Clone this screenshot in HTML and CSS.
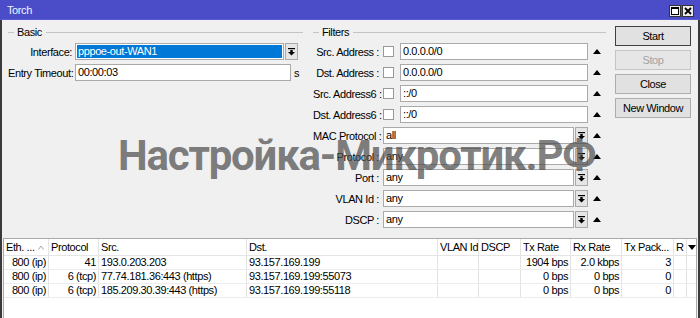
FILE: index.html
```html
<!DOCTYPE html>
<html>
<head>
<meta charset="utf-8">
<title>Torch</title>
<link rel="stylesheet" href="styles.css">
</head>
<body>
<div class="window">
  <div class="titlebar">
    <span class="title">Torch</span>
    <div class="tb-btns">
      <svg class="tb-btn" width="12" height="12" viewBox="0 0 12 12"><rect x="0.5" y="0.5" width="11" height="11" fill="#ececec" stroke="#333"/><rect x="2.5" y="2.5" width="7" height="7" fill="#fff" stroke="#000"/><rect x="2" y="2" width="8" height="2" fill="#000"/></svg>
      <svg class="tb-btn" width="12" height="12" viewBox="0 0 12 12"><rect x="0.5" y="0.5" width="11" height="11" fill="#ececec" stroke="#333"/><path d="M3 3L9 9M9 3L3 9" stroke="#000" stroke-width="1.8"/></svg>
    </div>
  </div>
  <div class="frame">
    <div class="main">
      <section class="group basic">
        <div class="legend"><span>Basic</span></div>
        <div class="rows">
          <div class="row">
            <label class="lbl">Interface:</label>
            <div class="combo selected">pppoe-out-WAN1</div>
            <span class="dd"><svg width="7" height="8" viewBox="0 0 7 8"><rect x="0" y="0" width="7" height="1.2"/><rect x="2.3" y="2" width="2.4" height="2.2"/><path d="M0 4h7L3.5 7.6z"/></svg></span>
          </div>
          <div class="row">
            <label class="lbl">Entry Timeout:</label>
            <div class="input timeout">00:00:03</div>
            <span class="unit">s</span>
          </div>
        </div>
      </section>

      <section class="group filters">
        <div class="legend"><span>Filters</span></div>
        <div class="rows">
          <div class="row">
            <label class="lbl">Src. Address :</label>
            <div class="field"><span class="cb"></span><div class="input">0.0.0.0/0</div></div>
            <svg class="up" width="8" height="5" viewBox="0 0 8 5"><path d="M0 5h8L4 0z"/></svg>
          </div>
          <div class="row">
            <label class="lbl">Dst. Address :</label>
            <div class="field"><span class="cb"></span><div class="input">0.0.0.0/0</div></div>
            <svg class="up" width="8" height="5" viewBox="0 0 8 5"><path d="M0 5h8L4 0z"/></svg>
          </div>
          <div class="row">
            <label class="lbl">Src. Address6 :</label>
            <div class="field"><span class="cb"></span><div class="input">::/0</div></div>
            <svg class="up" width="8" height="5" viewBox="0 0 8 5"><path d="M0 5h8L4 0z"/></svg>
          </div>
          <div class="row">
            <label class="lbl">Dst. Address6 :</label>
            <div class="field"><span class="cb"></span><div class="input">::/0</div></div>
            <svg class="up" width="8" height="5" viewBox="0 0 8 5"><path d="M0 5h8L4 0z"/></svg>
          </div>
          <div class="row">
            <label class="lbl">MAC Protocol :</label>
            <div class="field"><div class="combo">all</div><span class="dd"><svg width="7" height="8" viewBox="0 0 7 8"><rect x="0" y="0" width="7" height="1.2"/><rect x="2.3" y="2" width="2.4" height="2.2"/><path d="M0 4h7L3.5 7.6z"/></svg></span></div>
            <svg class="up" width="8" height="5" viewBox="0 0 8 5"><path d="M0 5h8L4 0z"/></svg>
          </div>
          <div class="row">
            <label class="lbl">Protocol :</label>
            <div class="field"><div class="combo">any</div><span class="dd"><svg width="7" height="8" viewBox="0 0 7 8"><rect x="0" y="0" width="7" height="1.2"/><rect x="2.3" y="2" width="2.4" height="2.2"/><path d="M0 4h7L3.5 7.6z"/></svg></span></div>
            <svg class="up" width="8" height="5" viewBox="0 0 8 5"><path d="M0 5h8L4 0z"/></svg>
          </div>
          <div class="row">
            <label class="lbl">Port :</label>
            <div class="field"><div class="combo">any</div><span class="dd"><svg width="7" height="8" viewBox="0 0 7 8"><rect x="0" y="0" width="7" height="1.2"/><rect x="2.3" y="2" width="2.4" height="2.2"/><path d="M0 4h7L3.5 7.6z"/></svg></span></div>
            <svg class="up" width="8" height="5" viewBox="0 0 8 5"><path d="M0 5h8L4 0z"/></svg>
          </div>
          <div class="row">
            <label class="lbl">VLAN Id :</label>
            <div class="field"><div class="combo">any</div><span class="dd"><svg width="7" height="8" viewBox="0 0 7 8"><rect x="0" y="0" width="7" height="1.2"/><rect x="2.3" y="2" width="2.4" height="2.2"/><path d="M0 4h7L3.5 7.6z"/></svg></span></div>
            <svg class="up" width="8" height="5" viewBox="0 0 8 5"><path d="M0 5h8L4 0z"/></svg>
          </div>
          <div class="row">
            <label class="lbl">DSCP :</label>
            <div class="field"><div class="combo">any</div><span class="dd"><svg width="7" height="8" viewBox="0 0 7 8"><rect x="0" y="0" width="7" height="1.2"/><rect x="2.3" y="2" width="2.4" height="2.2"/><path d="M0 4h7L3.5 7.6z"/></svg></span></div>
            <svg class="up" width="8" height="5" viewBox="0 0 8 5"><path d="M0 5h8L4 0z"/></svg>
          </div>
        </div>
      </section>

      <div class="buttons">
        <button class="btn default">Start</button>
        <button class="btn disabled">Stop</button>
        <button class="btn">Close</button>
        <button class="btn">New Window</button>
      </div>
    </div>

    <div class="table">
      <div class="tr head">
        <div class="th sort"><span>Eth. ...</span><svg width="6" height="5" viewBox="0 0 6 5"><path d="M0.5 4.5L3 1L5.5 4.5" fill="none" stroke="#a8a8a8"/></svg></div>
        <div class="th">Protocol</div>
        <div class="th">Src.</div>
        <div class="th">Dst.</div>
        <div class="th">VLAN Id</div>
        <div class="th">DSCP</div>
        <div class="th">Tx Rate</div>
        <div class="th">Rx Rate</div>
        <div class="th">Tx Pack...</div>
        <div class="th">R</div>
        <div class="th menu"><svg width="8" height="5" viewBox="0 0 8 5"><path d="M0 0h8L4 5z"/></svg></div>
      </div>
      <div class="tr">
        <div class="td r">800 (ip)</div>
        <div class="td r">41</div>
        <div class="td">193.0.203.203</div>
        <div class="td">93.157.169.199</div>
        <div class="td"></div>
        <div class="td"></div>
        <div class="td r">1904 bps</div>
        <div class="td r">2.0 kbps</div>
        <div class="td r">3</div>
        <div class="td"></div>
        <div class="td last"></div>
      </div>
      <div class="tr">
        <div class="td r">800 (ip)</div>
        <div class="td r">6 (tcp)</div>
        <div class="td">77.74.181.36:443 (https)</div>
        <div class="td">93.157.169.199:55073</div>
        <div class="td"></div>
        <div class="td"></div>
        <div class="td r">0 bps</div>
        <div class="td r">0 bps</div>
        <div class="td r">0</div>
        <div class="td"></div>
        <div class="td last"></div>
      </div>
      <div class="tr">
        <div class="td r">800 (ip)</div>
        <div class="td r">6 (tcp)</div>
        <div class="td">185.209.30.39:443 (https)</div>
        <div class="td">93.157.169.199:55118</div>
        <div class="td"></div>
        <div class="td"></div>
        <div class="td r">0 bps</div>
        <div class="td r">0 bps</div>
        <div class="td r">0</div>
        <div class="td"></div>
        <div class="td last"></div>
      </div>
    </div>

    <div class="watermark">Настройка-Микротик.РФ</div>
  </div>
</div>
</body>
</html>
```

FILE: styles.css
```css
* { box-sizing: border-box; }
html, body { margin: 0; padding: 0; }
body {
  width: 700px;
  height: 318px;
  overflow: hidden;
  background: #f0f0f0;
  font-family: "Liberation Sans", Arial, sans-serif;
  font-size: 11px;
  letter-spacing: -0.4px;
  color: #000;
}
.window {
  width: 700px;
  height: 318px;
  display: flex;
  flex-direction: column;
}
.titlebar {
  height: 20px;
  flex: none;
  background: #4a4cc8;
  display: flex;
  align-items: center;
  justify-content: space-between;
  padding: 0 6px 0 7px;
  border-bottom: 1px solid #5a5cd0;
}
.title { color: #f4f4ff; font-size: 11px; }
.tb-btns { display: flex; gap: 1px; margin-top: 2px; }
.tb-btn { display: block; }

.frame {
  position: relative;
  flex: 1;
  display: flex;
  flex-direction: column;
  border-left: 2px solid #3a3a3a;
  border-right: 2px solid #3a3a3a;
  background: #f0f0f0;
}
.main {
  display: flex;
  padding: 5px 0 10px 6px;
}
.group { display: flex; flex-direction: column; }
.basic { width: 295px; }
.filters { width: 293px; margin-left: 10px; }
.legend {
  display: flex;
  align-items: center;
  height: 14px;
  margin-bottom: 4px;
}
.legend::before {
  content: "";
  width: 6px;
  height: 1px;
  background: #c4c4c4;
  margin-right: 3px;
}
.legend::after {
  content: "";
  flex: 1;
  height: 1px;
  background: #c4c4c4;
  margin-left: 4px;
}
.rows { display: flex; flex-direction: column; gap: 4px; }
.row { height: 17px; display: flex; align-items: center; }
.lbl { white-space: nowrap; text-align: right; }
.basic .lbl { width: 64px; margin-right: 3px; }
.filters .lbl { width: 66px; margin-right: 4px; }

.input, .combo {
  height: 17px;
  border: 1px solid #aaaaaa;
  background: #fff;
  padding-left: 2px;
  line-height: 15px;
  white-space: nowrap;
  overflow: hidden;
}
.combo.selected {
  width: 209px;
  padding: 1px 1px 1px 2px;
  line-height: 13px;
  background: #0078d7;
  color: #fff;
  box-shadow: inset 0 0 0 1px #fff;
}
.timeout { width: 216px; }
.unit { margin-left: 3px; }
.dd {
  width: 13px;
  height: 17px;
  margin-left: 1px;
  flex: none;
  border: 1px solid #aaaaaa;
  background: #e5e5e5;
  display: flex;
  align-items: center;
  justify-content: center;
}
.field { width: 205px; display: flex; align-items: center; }
.field .input, .field .combo { flex: 1; }
.cb {
  width: 11px;
  height: 11px;
  flex: none;
  border: 1px solid #999;
  background: #fff;
  margin-right: 6px;
}
.up { margin-left: 5px; flex: none; }

.buttons {
  width: 76px;
  margin-left: 9px;
  margin-top: 1px;
  display: flex;
  flex-direction: column;
  gap: 4px;
}
.btn {
  height: 20px;
  padding: 0;
  font: inherit;
  letter-spacing: -0.4px;
  color: #000;
  background: #e1e1e1;
  border: 1px solid #adadad;
}
.btn.default { border-color: #404040; }
.btn.disabled { color: #a3a3a3; border-color: #c4c4c4; background: #e6e6e6; }

.table {
  flex: 1;
  margin: 0 1px 0 1px;
  border: 1px solid #a9a9a9;
  border-bottom: none;
  background: #fff;
}
.tr {
  display: grid;
  grid-template-columns: 45px 50px 148px 191px 41px 42px 50px 51px 52px 13px 1fr;
  height: 14px;
  border-bottom: 1px solid #ececec;
}
.tr.head { height: 17px; border-bottom: 1px solid #e5e5e5; }
.th, .td {
  border-right: 1px solid #e3e3e3;
  white-space: nowrap;
  overflow: hidden;
}
.th { padding-left: 2px; line-height: 16px; display: flex; align-items: center; }
.td { padding: 0 2px; line-height: 13px; }
.td.r { text-align: right; }
.th.sort { justify-content: space-between; padding-right: 4px; }
.th.menu, .td.last { border-right: none; }
.th.menu { justify-content: center; padding-left: 0; }

.watermark {
  position: absolute;
  left: 116px;
  top: 115px;
  font-family: Roboto, "Open Sans", sans-serif;
  font-weight: 700;
  font-size: 42px;
  line-height: 42px;
  letter-spacing: -1.2px;
  color: rgba(72, 72, 72, 0.7);
  white-space: nowrap;
  pointer-events: none;
}
```
